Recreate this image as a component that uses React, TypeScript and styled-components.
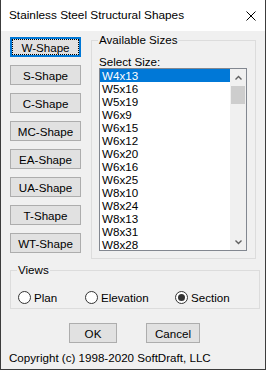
import React from "react";
import styled, { createGlobalStyle } from "styled-components";

const Global = createGlobalStyle`
  html, body { margin: 0; padding: 0; background: #fff; }
  body { font-family: "Liberation Sans", Arial, sans-serif; font-size: 11.6px; color: #000; }
  * { box-sizing: border-box; }
`;

const Window = styled.div`
  width: 266px;
  height: 370px;
  background: #f0f0f0;
  border-left: 1px solid #3c3c3c;
  border-right: 1px solid #3c3c3c;
  border-bottom: 1px solid #3c3c3c;
  display: flex;
  flex-direction: column;
  overflow: hidden;
`;

const TitleBar = styled.div`
  height: 31px;
  flex: none;
  background: #fff;
  display: flex;
  align-items: center;
  justify-content: space-between;
  padding: 0 9px 1px 8px;
  font-size: 11.8px;
`;

const CloseBtn = styled.div`
  width: 10px;
  height: 10px;
  margin-top: 1px;
  display: flex;
`;

const Body = styled.div`
  padding: 6px 9px 0 9px;
  display: flex;
  flex-direction: column;
`;

const TopSection = styled.div`
  display: flex;
  gap: 10px;
`;

const ShapeColumn = styled.div`
  width: 72px;
  display: flex;
  flex-direction: column;
  gap: 8px;
`;

const WinButton = styled.button<{ $focused?: boolean; $w?: number }>`
  position: relative;
  width: ${(p) => (p.$w ? `${p.$w}px` : "100%")};
  height: 20px;
  padding: 0;
  margin: 0;
  font-family: "Liberation Sans", Arial, sans-serif;
  font-size: 11.6px;
  color: #000;
  background: #e1e1e1;
  border: ${(p) => (p.$focused ? "2px solid #0078d7" : "1px solid #adadad")};
  display: flex;
  align-items: center;
  justify-content: center;
  ${(p) =>
    p.$focused
      ? `&::after { content: ""; position: absolute; inset: 0; border: 1px dotted #000; }`
      : ""}
`;

const GroupBox = styled.div<{ $w: number; $h: number }>`
  position: relative;
  width: ${(p) => p.$w}px;
  height: ${(p) => p.$h}px;
  border: 1px solid #dcdcdc;
`;

const SizesGroup = styled(GroupBox)`
  margin-top: 3px;
  padding: 14px 8px 7px 7px;
  display: flex;
  flex-direction: column;
`;

const Caption = styled.span`
  position: absolute;
  top: -8px;
  left: 6px;
  padding: 0 1px;
  background: #f0f0f0;
  line-height: 14px;
`;

const FieldLabel = styled.div`
  line-height: 13px;
  height: 13px;
`;

const ListBox = styled.div`
  flex: 1;
  border: 1px solid #828790;
  background: #fff;
  display: flex;
  overflow: hidden;
`;

const Items = styled.div`
  flex: 1;
  overflow: hidden;
`;

const Item = styled.div<{ $sel?: boolean }>`
  height: 13px;
  line-height: 13px;
  padding-left: 2px;
  background: ${(p) => (p.$sel ? "#0078d7" : "transparent")};
  color: ${(p) => (p.$sel ? "#fff" : "#000")};
  white-space: nowrap;
`;

const ScrollBar = styled.div`
  width: 16px;
  background: #f0f0f0;
  display: flex;
  flex-direction: column;
`;

const ArrowBox = styled.div`
  height: 17px;
  flex: none;
  display: flex;
  align-items: center;
  justify-content: center;
`;

const Thumb = styled.div`
  height: 18px;
  margin: 0 1px;
  background: #cdcdcd;
`;

const Track = styled.div`
  flex: 1;
`;

const ViewsGroup = styled(GroupBox)`
  margin-top: 11px;
  padding: 20px 0 0 7px;
  display: flex;
`;

const Radio = styled.label<{ $w?: number }>`
  display: flex;
  align-items: center;
  gap: 3px;
  height: 13px;
  width: ${(p) => (p.$w ? `${p.$w}px` : "auto")};
`;

const RadioCircle = styled.span<{ $on?: boolean }>`
  width: 13px;
  height: 13px;
  border-radius: 50%;
  border: 1px solid #333;
  background: #fff;
  display: flex;
  align-items: center;
  justify-content: center;
  &::after {
    content: "";
    width: 7px;
    height: 7px;
    border-radius: 50%;
    background: ${(p) => (p.$on ? "#333" : "transparent")};
  }
`;

const ButtonRow = styled.div`
  margin-top: 14px;
  display: flex;
  gap: 29px;
  padding-left: 59px;
`;

const Copyright = styled.div`
  margin-top: 8px;
  margin-left: -1px;
  line-height: 14px;
`;

const Chevron = ({ up }: { up?: boolean }) => (
  <svg width="9" height="6" viewBox="0 0 9 6">
    <path
      d={up ? "M1.5 4.5 L4.5 1.5 L7.5 4.5" : "M1.5 1.5 L4.5 4.5 L7.5 1.5"}
      fill="none"
      stroke="#606060"
      strokeWidth="1.4"
    />
  </svg>
);

const shapes = ["W-Shape", "S-Shape", "C-Shape", "MC-Shape", "EA-Shape", "UA-Shape", "T-Shape", "WT-Shape"];
const sizes = ["W4x13", "W5x16", "W5x19", "W6x9", "W6x15", "W6x12", "W6x20", "W6x16", "W6x25", "W8x10", "W8x24", "W8x13", "W8x31", "W8x28"];

export default function App() {
  return (
    <>
      <Global />
      <Window>
        <TitleBar>
          <span>Stainless Steel Structural Shapes</span>
          <CloseBtn>
            <svg width="10" height="10" viewBox="0 0 10 10">
              <path d="M0.5 0.5 L9.5 9.5 M9.5 0.5 L0.5 9.5" stroke="#000" strokeWidth="1" />
            </svg>
          </CloseBtn>
        </TitleBar>
        <Body>
          <TopSection>
            <ShapeColumn>
              {shapes.map((s, i) => (
                <WinButton key={s} $focused={i === 0}>
                  {s}
                </WinButton>
              ))}
            </ShapeColumn>
            <SizesGroup $w={167} $h={219}>
              <Caption>Available Sizes</Caption>
              <FieldLabel>Select Size:</FieldLabel>
              <ListBox>
                <Items>
                  {sizes.map((s, i) => (
                    <Item key={s} $sel={i === 0}>
                      {s}
                    </Item>
                  ))}
                </Items>
                <ScrollBar>
                  <ArrowBox>
                    <Chevron up />
                  </ArrowBox>
                  <Thumb />
                  <Track />
                  <ArrowBox>
                    <Chevron />
                  </ArrowBox>
                </ScrollBar>
              </ListBox>
            </SizesGroup>
          </TopSection>
          <ViewsGroup $w={250} $h={39}>
            <Caption>Views</Caption>
            <Radio $w={67}>
              <RadioCircle />
              Plan
            </Radio>
            <Radio $w={90}>
              <RadioCircle />
              Elevation
            </Radio>
            <Radio>
              <RadioCircle $on />
              Section
            </Radio>
          </ViewsGroup>
          <ButtonRow>
            <WinButton $w={48}>OK</WinButton>
            <WinButton $w={54}>Cancel</WinButton>
          </ButtonRow>
          <Copyright>Copyright (c) 1998-2020 SoftDraft, LLC</Copyright>
        </Body>
      </Window>
    </>
  );
}
